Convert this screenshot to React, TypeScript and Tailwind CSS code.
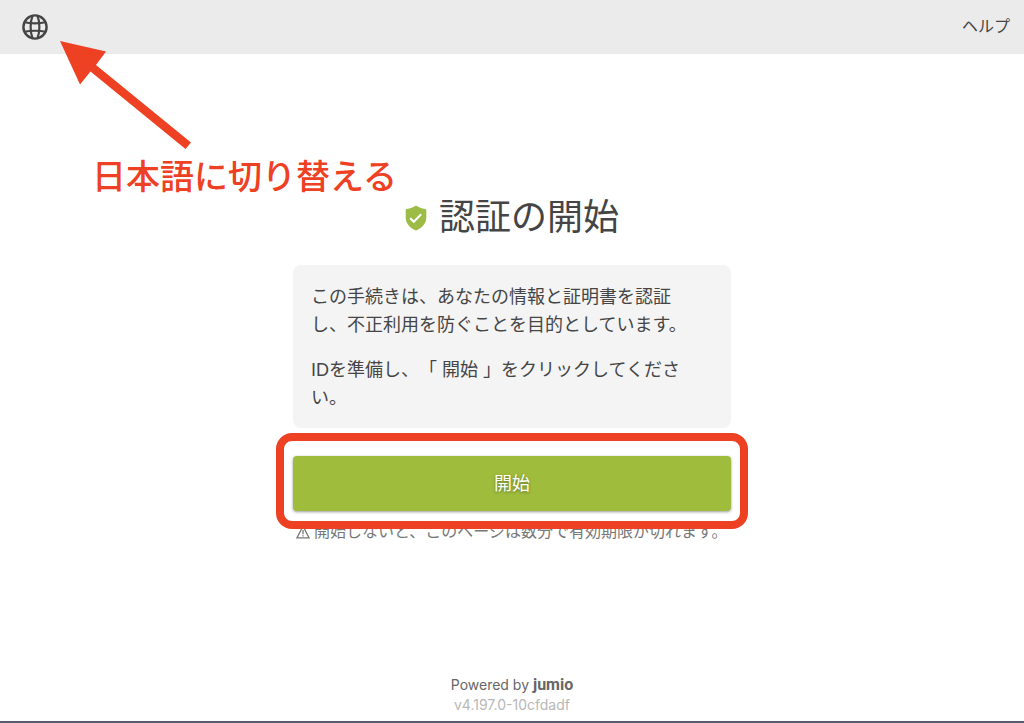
function GlobeIcon() {
  return (
    <svg viewBox="0 0 26 26" className="w-[26px] h-[26px]" fill="none" stroke="#454545" strokeWidth="2.2" aria-hidden="true">
      <circle cx="13" cy="13" r="11.6" strokeWidth="2.4" />
      <path d="M10.500 1.800C8 8 8 18 10.500 24.200M15.500 1.800C18 8 18 18 15.500 24.200" />
      <path d="M2.500 8.300C8 9.600 18 9.600 23.500 8.300M2.500 17.700C8 16.400 18 16.400 23.500 17.700" />
    </svg>
  );
}

function ShieldIcon() {
  return (
    <svg viewBox="0 0 22 26" className="w-[22px] h-[26px]" aria-hidden="true">
      <path
        d="M11 .6c2.6 1.900 5.700 3.100 9.200 3.400.7.1 1.100.5 1.100 1.200v7.300c0 5.800-4.200 10.800-10.300 12.900C4.900 23.300.7 18.300.7 12.500V5.200C.7 4.500 1.100 4.100 1.800 4 5.300 3.700 8.400 2.500 11 .6z"
        fill="#9cbc46"
      />
      <path d="M5.200 13.200l3.600 3.600 7.400-7.600" fill="none" stroke="#fff" strokeWidth="2" />
    </svg>
  );
}

function WarningIcon() {
  return (
    <svg viewBox="0 0 14 14" className="h-3.5 w-3.5 shrink-0" fill="none" stroke="#777777" strokeWidth="1.3" aria-hidden="true">
      <path d="M7 1.300L13 12.800H1z" />
      <path d="M7 5v4.300M7 10.200v1.400" />
    </svg>
  );
}

function Header() {
  return (
    <header className="flex h-[54px] items-center justify-between bg-[#ebebeb] pl-[22px] pr-3.5">
      <button type="button" aria-label="言語">
        <GlobeIcon />
      </button>
      <a href="#help" className="text-base text-[#454545]">ヘルプ</a>
    </header>
  );
}

function LanguageHint() {
  return (
    <div className="pointer-events-none absolute left-[60px] top-[41px] text-[#ee4023]">
      <svg viewBox="0 0 132 108" className="h-[108px] w-[132px]" fill="currentColor" aria-hidden="true">
        <path d="M0 0l46 10.500-10 13.500L131 101.500l-5.500 6.500L30.500 30.500 20 43.500z" />
      </svg>
      <p className="ml-8 mt-1 whitespace-nowrap text-[34px] leading-[48px] font-medium">日本語に切り替える</p>
    </div>
  );
}

function Footer() {
  return (
    <footer className="border-b-2 border-[#555e70] pb-1.5 text-center font-[Inter,sans-serif] text-sm leading-5">
      <p className="text-[#666666]">
        Powered by{' '}
        <span className="font-[Roboto,sans-serif] text-base leading-5 font-bold">jumio</span>
      </p>
      <p className="text-[#b8b8b8]">v4.197.0-10cfdadf</p>
    </footer>
  );
}

export default function App() {
  return (
    <div className="relative flex min-h-screen flex-col bg-white font-['Liberation_Sans','Noto_Sans_CJK_JP',sans-serif] text-[#454545]">
      <Header />
      <main className="mx-auto w-full max-w-[438px] flex-1 pt-36">
        <h1 className="flex items-center justify-center gap-3 text-4xl leading-10">
          <ShieldIcon />
          認証の開始
        </h1>

        <div className="mt-[27px] space-y-[17px] rounded-lg bg-[#f4f4f4] pt-[18px] pb-4 pl-[18px] pr-8 text-lg leading-7 [text-spacing-trim:space-all]">
          <p>この手続きは、あなたの情報と証明書を認証し、不正利用を防ぐことを目的としています。</p>
          <p>IDを準備し、「 開始 」をクリックしてください。</p>
        </div>

        <div className="relative z-10 mt-7">
          <button
            type="button"
            className="h-[55px] w-full rounded bg-[#9fbc3d] text-lg text-white shadow-[0_1px_3px_rgba(0,0,0,0.4)] [text-shadow:0_1px_3px_rgba(0,0,0,0.4)]"
          >
            開始
          </button>
          <div className="pointer-events-none absolute -inset-x-[17px] -top-[23px] -bottom-[18px] rounded-2xl border-8 border-[#ee4023]" />
        </div>

        <p className="mt-[9px] flex items-center gap-1 pl-[3px] text-base leading-6 whitespace-nowrap text-[#777777]">
          <WarningIcon />
          開始しないと、このページは数分で有効期限が切れます。
        </p>
      </main>
      <Footer />
      <LanguageHint />
    </div>
  );
}
